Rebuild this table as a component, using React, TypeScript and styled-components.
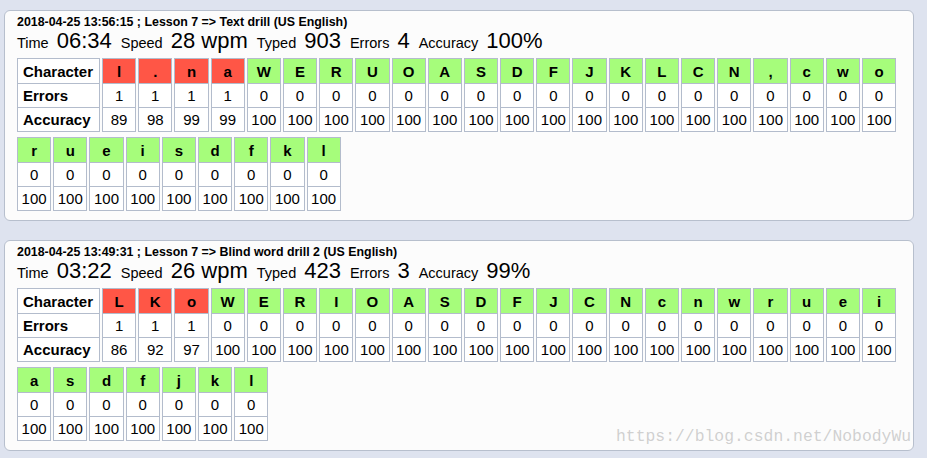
import React from "react";
import styled, { createGlobalStyle } from "styled-components";

type CharStat = { ch: string; errors: number; accuracy: number };

type Session = {
  title: string;
  time: string;
  speed: string;
  typed: string;
  errors: string;
  accuracy: string;
  chars: CharStat[];
};

const ok = (s: string): CharStat[] =>
  s.split(" ").map((ch) => ({ ch, errors: 0, accuracy: 100 }));

const sessions: Session[] = [
  {
    title: "2018-04-25 13:56:15 ; Lesson 7 => Text drill (US English)",
    time: "06:34",
    speed: "28 wpm",
    typed: "903",
    errors: "4",
    accuracy: "100%",
    chars: [
      { ch: "l", errors: 1, accuracy: 89 },
      { ch: ".", errors: 1, accuracy: 98 },
      { ch: "n", errors: 1, accuracy: 99 },
      { ch: "a", errors: 1, accuracy: 99 },
      ...ok("W E R U O A S D F J K L C N , c w o r u e i s d f k l"),
    ],
  },
  {
    title: "2018-04-25 13:49:31 ; Lesson 7 => Blind word drill 2 (US English)",
    time: "03:22",
    speed: "26 wpm",
    typed: "423",
    errors: "3",
    accuracy: "99%",
    chars: [
      { ch: "L", errors: 1, accuracy: 86 },
      { ch: "K", errors: 1, accuracy: 92 },
      { ch: "o", errors: 1, accuracy: 97 },
      ...ok("W E R I O A S D F J C N c n w r u e i a s d f j k l"),
    ],
  },
];

const GlobalStyle = createGlobalStyle`
  html, body {
    margin: 0;
    padding: 0;
    background: #dee3ef;
  }
  body {
    font-family: "Liberation Sans", Arial, sans-serif;
    color: #000;
  }
`;

const Page = styled.div`
  position: relative;
  display: flex;
  flex-direction: column;
  gap: 19px;
  padding: 10px 0 0 4px;
  width: 927px;
  height: 458px;
  box-sizing: border-box;
  overflow: hidden;
`;

const Panel = styled.section`
  width: 910px;
  box-sizing: border-box;
  background: #fcfcfc;
  border: 1px solid #b7bfcd;
  border-radius: 6px;
  padding: 4px 12px 9px 12px;
  display: flex;
  flex-direction: column;
`;

const Title = styled.div`
  font-size: 12.4px;
  font-weight: 700;
  line-height: 15px;
  white-space: nowrap;
`;

const Stats = styled.div`
  display: flex;
  align-items: baseline;
  gap: 8px;
  height: 22px;
  line-height: 22px;
  white-space: nowrap;
`;

const StatLabel = styled.span`
  font-size: 14.5px;
`;

const StatValue = styled.span`
  font-size: 22px;
  margin-right: 1px;
`;

const Grid = styled.div`
  display: flex;
  flex-wrap: wrap;
  column-gap: 2px;
  row-gap: 5px;
  margin-top: 6px;
`;

const Column = styled.div<{ $label?: boolean }>`
  width: ${(p) => (p.$label ? "83px" : "34.2px")};
  box-sizing: border-box;
  border: 1px solid #b3bccc;
  display: flex;
  flex-direction: column;
  background: #fff;
`;

const Cell = styled.div<{ $head?: boolean; $bg?: string; $label?: boolean }>`
  height: ${(p) => (p.$head ? "24px" : "23px")};
  display: flex;
  align-items: center;
  justify-content: ${(p) => (p.$label ? "flex-start" : "center")};
  padding-left: ${(p) => (p.$label ? "5px" : "0")};
  font-size: 15px;
  font-weight: ${(p) => (p.$head || p.$label ? 700 : 400)};
  background: ${(p) => p.$bg ?? "#fff"};
  & + & {
    border-top: 1px solid #b3bccc;
  }
`;

const Watermark = styled.div`
  position: absolute;
  left: 616px;
  top: 427px;
  font-family: "Liberation Mono", "Courier New", monospace;
  font-size: 16.4px;
  color: rgba(170, 170, 170, 0.55);
  white-space: nowrap;
  pointer-events: none;
`;

function CharColumn({ c }: { c: CharStat }) {
  const bg = c.errors > 0 ? "#ff5646" : "#a6fd7b";
  return (
    <Column>
      <Cell $head $bg={bg}>
        {c.ch}
      </Cell>
      <Cell>{c.errors}</Cell>
      <Cell>{c.accuracy}</Cell>
    </Column>
  );
}

function SessionPanel({ s }: { s: Session }) {
  return (
    <Panel>
      <Title>{s.title}</Title>
      <Stats>
        <StatLabel>Time</StatLabel>
        <StatValue>{s.time}</StatValue>
        <StatLabel>Speed</StatLabel>
        <StatValue>{s.speed}</StatValue>
        <StatLabel>Typed</StatLabel>
        <StatValue>{s.typed}</StatValue>
        <StatLabel>Errors</StatLabel>
        <StatValue>{s.errors}</StatValue>
        <StatLabel>Accuracy</StatLabel>
        <StatValue>{s.accuracy}</StatValue>
      </Stats>
      <Grid>
        <Column $label>
          <Cell $head $label>
            Character
          </Cell>
          <Cell $label>Errors</Cell>
          <Cell $label>Accuracy</Cell>
        </Column>
        {s.chars.map((c, i) => (
          <CharColumn key={i} c={c} />
        ))}
      </Grid>
    </Panel>
  );
}

export default function App() {
  return (
    <>
      <GlobalStyle />
      <Page>
        {sessions.map((s, i) => (
          <SessionPanel key={i} s={s} />
        ))}
        <Watermark>https://blog.csdn.net/NobodyWu</Watermark>
      </Page>
    </>
  );
}
